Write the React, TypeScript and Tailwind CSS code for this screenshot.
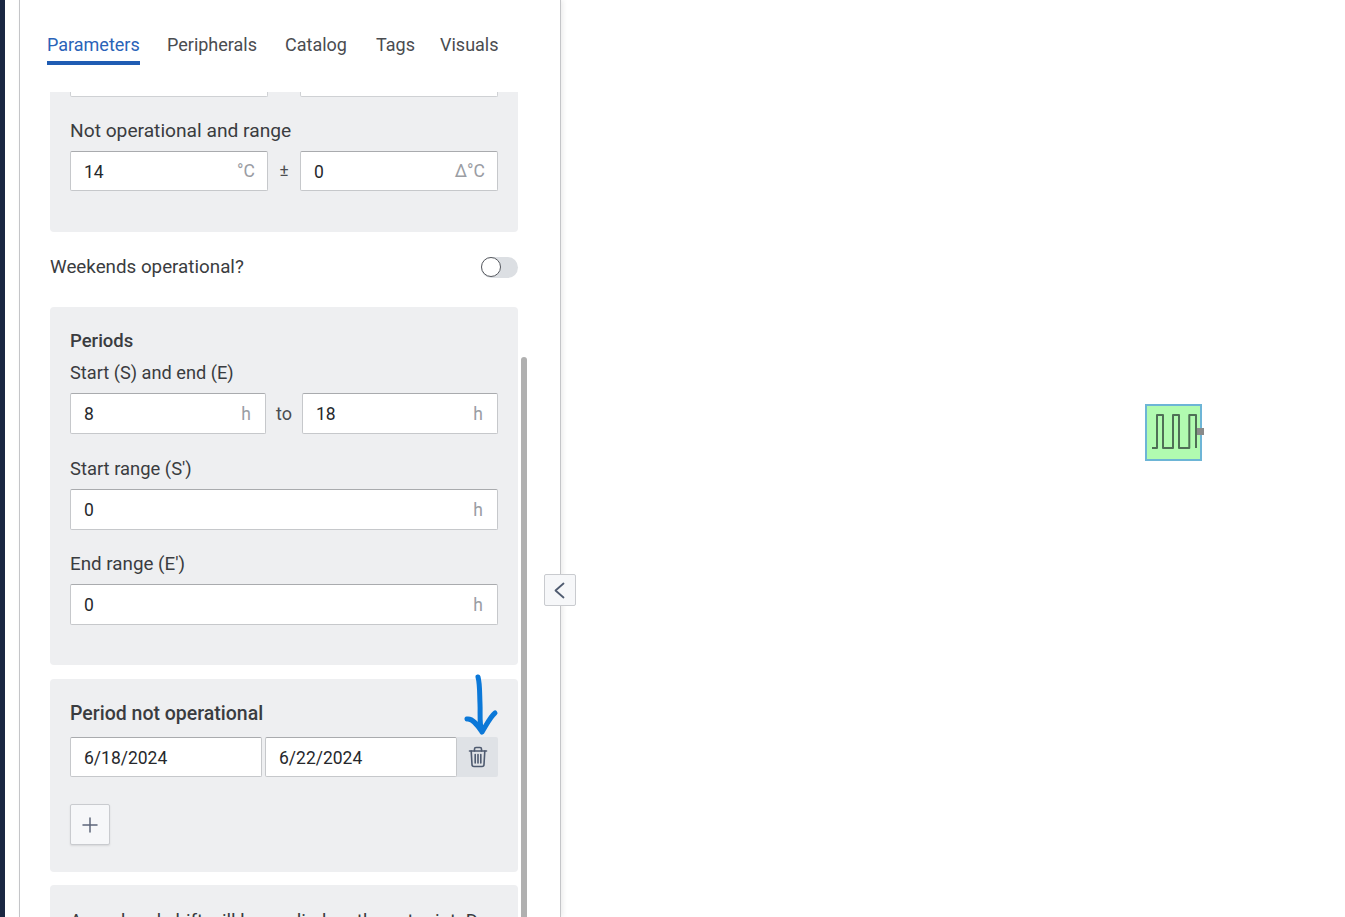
import { Plus } from "lucide-react";

const font = { fontFamily: 'Roboto, "Open Sans", sans-serif' };

const tabs = [
    { label: "Parameters", width: "w-[93px]" },
    { label: "Peripherals", width: "w-[91px]" },
    { label: "Catalog", width: "w-[64px]" },
    { label: "Tags", width: "w-[37px]" },
    { label: "Visuals", width: "w-[57px]" },
];

function UnitInput({ value, unit, className }: { value: string; unit?: string; className: string }) {
    return (
        <div
            className={`flex items-center justify-between rounded-[2px] border border-[#c6c8cb] border-t-[#a9abae] bg-white pl-[12px] pr-[12px] text-[17.5px] text-[#26282c] ${className}`}
        >
            <span className="ml-[1px] pt-[2px]">{value}</span>
            {unit && <span className={`text-[#9a9da3] ${unit === "h" ? "mr-[2px] pt-[2px]" : "pt-[1px]"}`}>{unit}</span>}
        </div>
    );
}

function FieldLabel({ children, className }: { children: string; className: string }) {
    return <div className={`leading-[24px] text-[#3a3c40] ${className}`}>{children}</div>;
}

export default function App() {
    return (
        <div className="relative flex h-[917px] overflow-hidden bg-white" style={font}>
            <div className="w-[5px] shrink-0 bg-[#1a2742]" />

            <aside className="relative ml-[14px] flex w-[542px] shrink-0 flex-col border-x border-[#c4c5c8] bg-white shadow-[2px_0_5px_rgba(0,0,0,0.08)]">
                {/* tabs */}
                <div className="flex h-[92px] shrink-0 gap-[27px] pl-[27px] pt-[32px]">
                    {tabs.map((tab, i) => (
                        <div
                            key={tab.label}
                            className={`h-[33px] whitespace-nowrap border-b-[4px] text-[18px] leading-[25px] ${tab.width} ${
                                i === 0 ? "border-[#1f5cb3] text-[#2a63b8]" : "border-transparent text-[#4a4c50]"
                            }`}
                        >
                            {tab.label}
                        </div>
                    ))}
                </div>

                <div className="flex-1 overflow-hidden pl-[30px] pr-[42px]">
                    <div className="rounded-b-[4px] bg-[#eeeff1] px-[20px] pb-[41px]">
                        <div className="flex justify-between">
                            <div className="h-[5px] w-[198px] rounded-b-[2px] border border-t-0 border-[#cfd1d4] bg-white" />
                            <div className="h-[5px] w-[198px] rounded-b-[2px] border border-t-0 border-[#cfd1d4] bg-white" />
                        </div>
                        <FieldLabel className="mt-[22px] text-[19.2px]">Not operational and range</FieldLabel>
                        <div className="mt-[8px] flex items-center justify-between">
                            <UnitInput value="14" unit="°C" className="h-10 w-[198px]" />
                            <span className="text-[17px] text-[#4a4c50]">±</span>
                            <UnitInput value="0" unit="Δ°C" className="h-10 w-[198px]" />
                        </div>
                    </div>

                    <div className="flex h-[75px] items-start justify-between pt-[23px]">
                        <span className="text-[18.8px] leading-[24px] text-[#3a3c40]">Weekends operational?</span>
                        <div className="mt-[2px] h-[21px] w-[37px] rounded-full bg-[#dcdfe3]">
                            <div className="h-[20px] w-[20px] rounded-full border-[1.5px] border-[#55585e] bg-white" />
                        </div>
                    </div>

                    <div className="h-[358px] rounded-[4px] bg-[#eeeff1] px-[20px] pt-[22px]">
                        <FieldLabel className="text-[18.5px] font-medium">Periods</FieldLabel>
                        <FieldLabel className="mt-[8px] text-[18.2px]">Start (S) and end (E)</FieldLabel>
                        <div className="mt-[8px] flex items-center justify-between">
                            <UnitInput value="8" unit="h" className="h-[41px] w-[196px]" />
                            <span className="text-[18px] text-[#4a4c50]">to</span>
                            <UnitInput value="18" unit="h" className="h-[41px] w-[196px]" />
                        </div>
                        <FieldLabel className="mt-[23px] text-[18.4px]">Start range (S')</FieldLabel>
                        <UnitInput value="0" unit="h" className="mt-[8px] h-[41px]" />
                        <FieldLabel className="mt-[22px] text-[18.8px]">End range (E')</FieldLabel>
                        <UnitInput value="0" unit="h" className="mt-[8px] h-[41px]" />
                    </div>

                    <div className="mt-[14px] h-[193px] rounded-[4px] bg-[#eeeff1] px-[20px] pt-[23px]">
                        <FieldLabel className="text-[19.5px] font-medium">Period not operational</FieldLabel>
                        <div className="mt-[11px] flex items-center">
                            <UnitInput value="6/18/2024" className="h-10 w-[192px]" />
                            <UnitInput value="6/22/2024" className="ml-[3px] h-10 w-[192px]" />
                            <div className="flex h-10 w-[41px] items-center justify-center rounded-r-[2px] bg-[#dfe2e6]">
                                <svg width="20" height="22" viewBox="0 0 20 22" fill="none" stroke="#4f5b70" strokeWidth="1.6" strokeLinecap="round" strokeLinejoin="round">
                                    <path d="M1.5 5H18.5" />
                                    <path d="M6.5 5V3C6.5 2 7.2 1.5 8 1.5H12C12.8 1.5 13.5 2 13.5 3V5" />
                                    <path d="M3.2 5L4 18.5C4 19.6 4.8 20.5 6 20.5H14C15.2 20.5 16 19.6 16 18.5L16.8 5" />
                                    <path d="M7.2 8.5V17M10 8.5V17M12.8 8.5V17" />
                                </svg>
                            </div>
                        </div>
                        <div className="mt-[27px] flex h-[41px] w-10 items-center justify-center rounded-[2px] border border-[#c9cbcf] bg-[#f6f7f9] shadow-[0_1px_2px_rgba(0,0,0,0.1)]">
                            <Plus size={24} strokeWidth={1.5} className="text-[#5c6679]" />
                        </div>
                    </div>

                    <div className="mt-[13px] h-[60px] overflow-hidden whitespace-nowrap rounded-[4px] bg-[#eeeff1] px-[20px] pt-[24px] text-[18.8px] leading-[24px] text-[#3a3c40]">
                        A weekend shift will be applied on the setpoint. D
                    </div>
                </div>

                {/* scrollbar */}
                <div className="absolute left-[501px] top-[357px] bottom-0 w-[6px] rounded-t-[3px] bg-[#b0b0b0]" />
                {/* collapse handle */}
                <div className="absolute left-[524px] top-[574px] flex h-[32px] w-[32px] items-center justify-center rounded-[2px] border border-[#c9cbcf] bg-[#f6f7f9] pr-[2px]">
                    <svg width="11" height="17" viewBox="0 0 11 17" fill="none" stroke="#4f5b70" strokeWidth="1.8" strokeLinecap="round" strokeLinejoin="round">
                        <path d="M9.5 1.5L1.5 8.5L9.5 15.5" />
                    </svg>
                </div>
            </aside>

            {/* hand drawn arrow */}
            <svg className="absolute left-[460px] top-[670px]" width="42" height="70" viewBox="0 0 42 70" fill="none">
                <path
                    d="M18 7C20 14 19.5 24 20 34C20.5 44 19 54 22 62C26 56 30 47 35 43M7 49C13 48 18 56 22 62"
                    stroke="#0b78d8"
                    strokeWidth="5"
                    strokeLinecap="round"
                    strokeLinejoin="round"
                />
            </svg>

            {/* diagram node */}
            <div className="absolute left-[1145px] top-[404px] h-[57px] w-[57px] border-2 border-[#6db5d6] bg-[#b1fbb0]">
                <svg className="absolute left-[4px] top-[8px] overflow-visible blur-[0.5px]" width="46" height="36" viewBox="0 0 46 36" fill="none">
                    <path
                        d="M1 34H6V1H12V34H22V1H28V34H38.3V1H45V34"
                        stroke="#4f6f56"
                        strokeWidth="2"
                        strokeLinejoin="round"
                    />
                </svg>
                <div className="absolute left-[50px] top-[22px] h-[7px] w-[7px] bg-[#8a8a8a]" />
            </div>
        </div>
    );
}
